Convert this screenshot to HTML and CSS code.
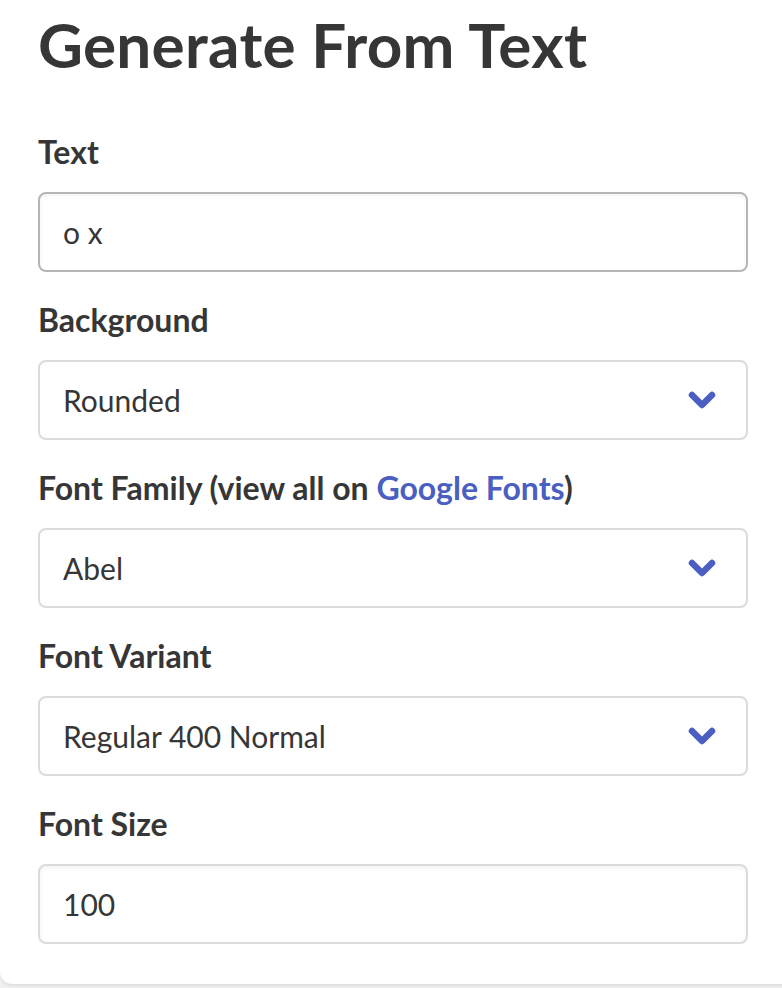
FILE: index.html
```html
<!DOCTYPE html>
<html lang="en">
<head>
<meta charset="utf-8">
<title>Generate From Text</title>
<link rel="stylesheet" href="styles.css">
</head>
<body>
<div class="box">
  <h1 class="title">Generate From Text</h1>
  <div class="field">
    <label class="label">Text</label>
    <div class="control">
      <div class="input is-hovered">o x</div>
    </div>
  </div>
  <div class="field">
    <label class="label">Background</label>
    <div class="control">
      <div class="select">
        <span>Rounded</span>
        <svg class="chevron" width="28" height="18" viewBox="0 0 28 18"><path d="M4 4 L14 14 L24 4" fill="none" stroke="#4a5fc1" stroke-width="6.5" stroke-linecap="round" stroke-linejoin="round"/></svg>
      </div>
    </div>
  </div>
  <div class="field">
    <label class="label">Font Family (view all on <a href="#" class="link">Google Fonts</a>)</label>
    <div class="control">
      <div class="select">
        <span>Abel</span>
        <svg class="chevron" width="28" height="18" viewBox="0 0 28 18"><path d="M4 4 L14 14 L24 4" fill="none" stroke="#4a5fc1" stroke-width="6.5" stroke-linecap="round" stroke-linejoin="round"/></svg>
      </div>
    </div>
  </div>
  <div class="field">
    <label class="label">Font Variant</label>
    <div class="control">
      <div class="select">
        <span>Regular 400 Normal</span>
        <svg class="chevron" width="28" height="18" viewBox="0 0 28 18"><path d="M4 4 L14 14 L24 4" fill="none" stroke="#4a5fc1" stroke-width="6.5" stroke-linecap="round" stroke-linejoin="round"/></svg>
      </div>
    </div>
  </div>
  <div class="field">
    <label class="label">Font Size</label>
    <div class="control">
      <div class="input">100</div>
    </div>
  </div>
</div>
</body>
</html>
```

FILE: styles.css
```css
html, body {
  margin: 0;
  padding: 0;
}
body {
  background: #f0f0f0;
  font-family: Lato, "Open Sans", sans-serif;
  color: #363636;
  height: 988px;
  overflow: hidden;
}
.box {
  background: #fff;
  border-radius: 0 0 12px 12px;
  box-shadow: 0 2px 3px rgba(10,10,10,0.08);
  padding: 8px 0 40px 38px;
  margin-right: -20px;
}
.title {
  margin: 0 0 48px 0;
  font-size: 62px;
  line-height: 72px;
  letter-spacing: 0.3px;
  font-weight: 700;
  color: #363636;
}
.field {
  margin-bottom: 24px;
}
.field:last-child {
  margin-bottom: 0;
}
.label {
  display: block;
  font-size: 32px;
  line-height: 48px;
  font-weight: 700;
  margin-bottom: 16px;
  color: #363636;
}
.link {
  color: #4a5fc1;
  text-decoration: none;
}
.control {
  width: 710px;
}
.input, .select {
  box-sizing: border-box;
  height: 80px;
  border: 2px solid #dbdbdb;
  border-radius: 8px;
  background: #fff;
  font-size: 30px;
  color: #363636;
  padding: 0 30px 0 23px;
  display: flex;
  align-items: center;
}
.input {
  box-shadow: inset 0 2px 4px rgba(10,10,10,0.05);
}
.input.is-hovered {
  border-color: #b5b5b5;
}
.select {
  justify-content: space-between;
}
.chevron {
  display: block;
  flex: none;
}
```
